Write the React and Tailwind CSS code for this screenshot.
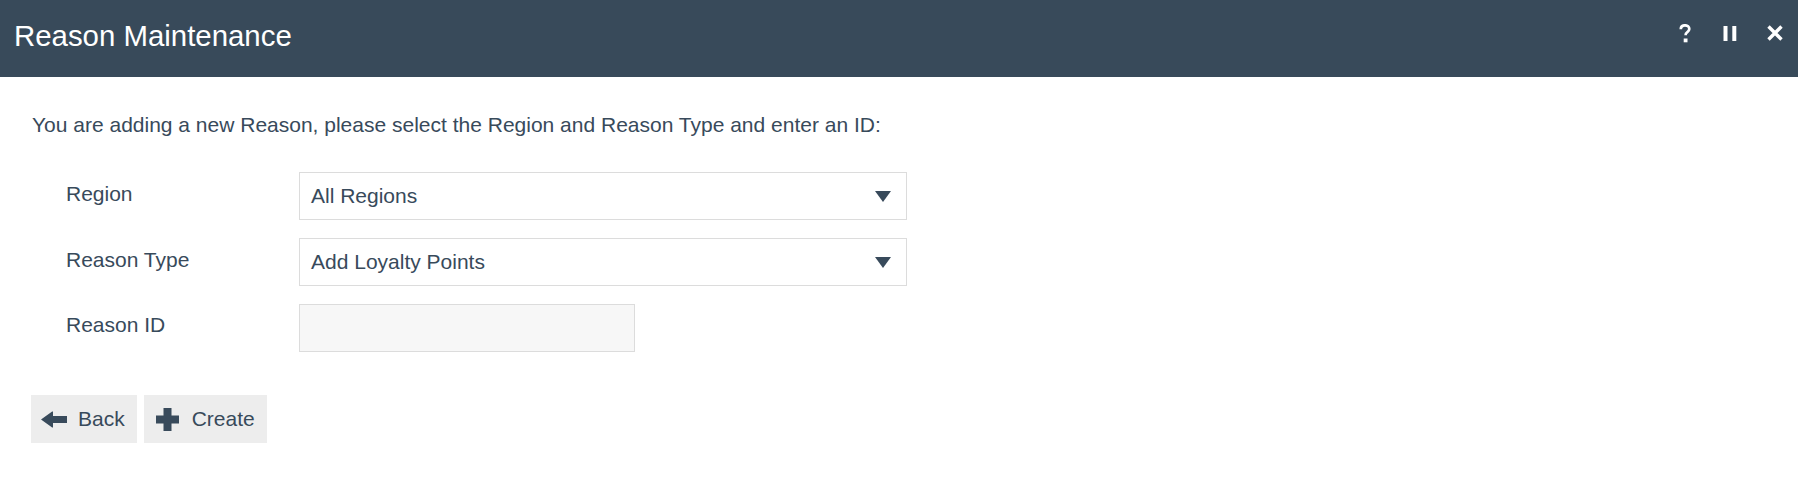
import React from "react";

const font = { fontFamily: '"Liberation Sans", Arial, sans-serif' };

function Caret() {
  return (
    <svg width="16" height="11" viewBox="0 0 16 11" className="shrink-0">
      <path d="M0 0 H16 L8 11 Z" fill="#384a5b" />
    </svg>
  );
}

function SelectBox({ value }) {
  return (
    <div className="flex h-[48px] w-[608px] items-center justify-between border border-[#dcdcdc] bg-white pl-[11px] pr-[15px] text-[21px] leading-[24px] text-[#384a5b]">
      <span>{value}</span>
      <Caret />
    </div>
  );
}

function HelpIcon() {
  return (
    <svg width="12" height="19" viewBox="0 0 12 19">
      <path
        d="M1.8 5.2 C1.8 2.6 3.6 1.3 6 1.3 C8.5 1.3 10.3 2.8 10.3 5 C10.3 6.9 9 7.7 7.9 8.5 C6.9 9.2 6.6 9.9 6.6 11.3"
        fill="none"
        stroke="#fff"
        strokeWidth="2.7"
      />
      <rect x="4.7" y="14.5" width="3.8" height="3.8" fill="#fff" />
    </svg>
  );
}

function PauseIcon() {
  return (
    <svg width="14" height="15" viewBox="0 0 14 15">
      <rect x="0.5" y="0" width="4" height="15" fill="#fff" />
      <rect x="9.3" y="0" width="4" height="15" fill="#fff" />
    </svg>
  );
}

function CloseIcon() {
  return (
    <svg width="16" height="16" viewBox="0 0 16 16">
      <path d="M1.5 1.5 L14.5 14.5 M14.5 1.5 L1.5 14.5" stroke="#fff" strokeWidth="3.4" />
    </svg>
  );
}

function ArrowLeft() {
  return (
    <svg width="26" height="17" viewBox="0 0 26 17" className="shrink-0">
      <path d="M0 8.5 L11.5 0.3 L12 1 L12 5 L26 5 L26 12 L12 12 L12 16 L11.5 16.7 Z" fill="#384a5b" />
    </svg>
  );
}

function Plus() {
  return (
    <svg width="23" height="23" viewBox="0 0 23 23" className="shrink-0">
      <rect x="7.5" y="0" width="8" height="23" fill="#384a5b" />
      <rect x="0" y="7.5" width="23" height="8" fill="#384a5b" />
    </svg>
  );
}

export default function App() {
  return (
    <div className="min-h-[485px] w-full bg-white" style={font}>
      <header className="flex h-[77px] items-start justify-between bg-[#384a5a] pl-[14px] pr-[15px]">
        <h1 className="pt-[19px] text-[29.4px] font-normal leading-[33px] text-white">Reason Maintenance</h1>
        <div className="flex h-[66px] items-center">
          <button className="flex items-center">
            <HelpIcon />
          </button>
          <button className="ml-[32px] flex items-center">
            <PauseIcon />
          </button>
          <button className="ml-[30px] flex items-center">
            <CloseIcon />
          </button>
        </div>
      </header>

      <main className="pl-[30px] pt-[36px] text-[#384a5b]">
        <p className="ml-[2px] text-[21px] leading-[24px]">
          You are adding a new Reason, please select the Region and Reason Type and enter an ID:
        </p>

        <div className="ml-[36px] mt-[35px] grid grid-cols-[233px_608px] gap-y-[18px] text-[21px] leading-[24px]">
          <label className="pt-[10px]">Region</label>
          <SelectBox value="All Regions" />

          <label className="pt-[10px]">Reason Type</label>
          <SelectBox value="Add Loyalty Points" />

          <label className="pt-[9px]">Reason ID</label>
          <input
            type="text"
            className="h-[48px] w-[336px] border border-[#dcdcdc] bg-[#f7f7f7] px-[12px] text-[21px] outline-none"
          />
        </div>

        <div className="ml-px mt-[43px] flex gap-[7px] text-[21px] leading-[24px]">
          <button className="flex h-[48px] items-center gap-[11px] bg-[#ededed] pl-[10px] pr-[12px] text-[#384a5b]">
            <ArrowLeft />
            <span>Back</span>
          </button>
          <button className="flex h-[48px] items-center gap-[13px] bg-[#ededed] pl-[12px] pr-[12px] text-[#384a5b]">
            <Plus />
            <span>Create</span>
          </button>
        </div>
      </main>
    </div>
  );
}
